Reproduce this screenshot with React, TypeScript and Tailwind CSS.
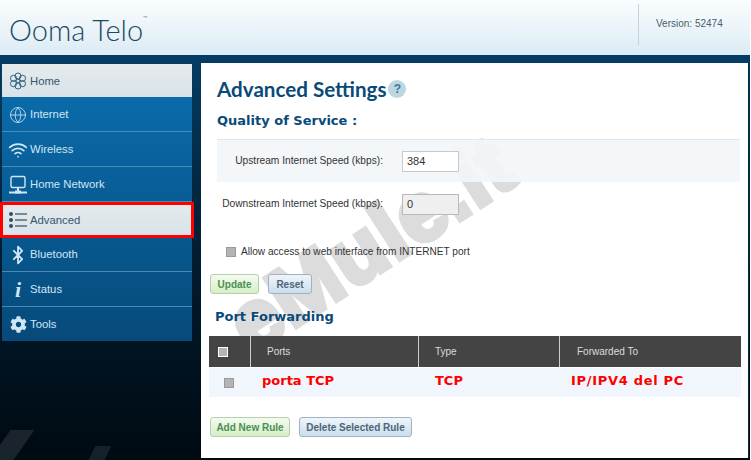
import { Bluetooth, Globe, Wifi } from "lucide-react";
import { FaCog } from "react-icons/fa";
import type { ReactNode } from "react";

const HomeIcon = () => (
  <svg width="18" height="18" viewBox="0 0 20 20" fill="none" stroke="#2f5f80" strokeWidth="1.1">
    <circle cx="10" cy="4.5" r="3.4" />
    <circle cx="10" cy="15.5" r="3.4" />
    <circle cx="5" cy="7" r="3.4" />
    <circle cx="15" cy="7" r="3.4" />
    <circle cx="5" cy="13" r="3.4" />
    <circle cx="15" cy="13" r="3.4" />
    <circle cx="10" cy="10" r="2.2" />
  </svg>
);

const NetworkIcon = () => (
  <svg width="20" height="20" viewBox="0 0 20 20" fill="none" stroke="#cfe6f5" strokeWidth="1.4">
    <rect x="3" y="1.5" width="14" height="11" rx="1.5" />
    <path d="M10 13v3M1 17.5h18" strokeWidth="2" />
    <rect x="7" y="15.5" width="6" height="3" fill="#cfe6f5" stroke="none" />
  </svg>
);

const ListIcon = () => (
  <svg width="18" height="16" viewBox="0 0 18 16" fill="#2f4f68">
    <circle cx="2" cy="2" r="2" />
    <circle cx="2" cy="8" r="2" />
    <circle cx="2" cy="14" r="2" />
    <rect x="6" y="1.4" width="12" height="1.2" />
    <rect x="6" y="7.4" width="12" height="1.2" />
    <rect x="6" y="13.4" width="12" height="1.2" />
  </svg>
);

type Item = { label: string; icon: ReactNode; light?: boolean; outlined?: boolean; h: string; last?: boolean };

const items: Item[] = [
  { label: "Home", icon: <HomeIcon />, light: true, h: "h-[33px]" },
  { label: "Internet", icon: <Globe size={18} strokeWidth={1.1} color="#cfe6f5" />, h: "h-[35px]" },
  { label: "Wireless", icon: <Wifi size={20} strokeWidth={2} color="#cfe6f5" />, h: "h-[35px]" },
  { label: "Home Network", icon: <NetworkIcon />, h: "h-[35px]" },
  { label: "Advanced", icon: <ListIcon />, light: true, outlined: true, h: "h-[35px]" },
  { label: "Bluetooth", icon: <Bluetooth size={20} strokeWidth={2.2} color="#cfe6f5" />, h: "h-[35px]" },
  {
    label: "Status",
    icon: <span className="font-['Liberation_Serif'] text-[22px] font-bold italic leading-none text-[#cfe6f5]">i</span>,
    h: "h-[35px]",
  },
  { label: "Tools", icon: <FaCog size={17} color="#cfe6f5" />, h: "h-[34px]", last: true },
];

function NavRow({ item }: { item: Item }) {
  return (
    <div
      className={
        item.light
          ? `relative flex ${item.h} items-center bg-gradient-to-b from-[#e6eaec] to-[#d8e3ea] pl-[4px] pt-[1px] text-[#35566e]`
          : `flex ${item.h} items-center ${item.last ? "" : "border-b border-[#4a8ab6]"} pl-[4px] pt-[1px] text-[#cfe6f5]`
      }
    >
      <span className="flex w-[24px] items-center justify-center">{item.icon}</span>
      <span className="text-[11.3px]">{item.label}</span>
      {item.outlined && <span className="absolute -inset-x-[2px] top-0 bottom-[-1px] border-[3px] border-[#fe0000]" />}
    </div>
  );
}

function Btn({ green, className, children }: { green?: boolean; className: string; children: ReactNode }) {
  return (
    <div
      className={`flex h-[20px] items-center justify-center rounded-[3px] border pt-[1px] text-[10px] font-bold ${
        green
          ? "border-[#b9cdb0] bg-gradient-to-b from-[#f4fbef] to-[#d4efc6] text-[#4d8f55]"
          : "border-[#9fb2c0] bg-gradient-to-b from-[#f0f5f9] to-[#c9deee] text-[#4f6577]"
      } ${className}`}
    >
      {children}
    </div>
  );
}

const Check = ({ className }: { className: string }) => (
  <span className={`block h-[10px] w-[10px] border border-[#9a9a9a] bg-[#b4b4b4] ${className}`} />
);

export default function App() {
  return (
    <div className="flex h-[460px] w-[751px] flex-col overflow-hidden bg-white font-['Liberation_Sans',sans-serif]">
      <header className="flex h-[55px] w-[750px] justify-between bg-gradient-to-b from-[#fbfdfe] to-[#dcebf5]">
        <div className="pl-[9px] pt-[15px] font-['Lato',sans-serif] text-[29px] font-light leading-none text-[#1d4a63]">
          Ooma Telo<span className="align-top text-[6px]">™</span>
        </div>
        <div className="mt-[4px] flex h-[41px] w-[112px] items-center border-l border-[#c6d2da] pb-[2px] pl-[17px] text-[10px] text-[#4a5f6b]">
          Version: 52474
        </div>
      </header>
      <div className="relative flex h-[405px] w-[750px] border-t-[5px] border-[#053c63] bg-gradient-to-b from-[#053c63] via-[#021c30] to-[#000a12] pb-[2px] pr-[1px] pt-[3px]">
        <aside className="relative ml-[2px] mt-[1px] w-[190px] shrink-0">
          <nav className="relative z-10 bg-gradient-to-b from-[#0b6fb0] to-[#064a7a]">
            {items.map((item) => (
              <NavRow key={item.label} item={item} />
            ))}
          </nav>
          <div className="absolute -bottom-[2px] left-[90px] h-[14px] w-[16px] -skew-x-[25deg] bg-[#14202a]" />
          <div className="absolute -bottom-[2px] left-[-2px] h-[30px] w-[24px] -skew-x-[35deg] bg-[#1a242c]" />
        </aside>
        <main className="relative ml-[9px] flex-1 overflow-hidden border-r border-[#0a2a40] bg-white pl-[8px] pr-[8px]">
          <div className="pointer-events-none absolute left-[9px] top-[139px] origin-center -rotate-[33deg] whitespace-nowrap font-['Liberation_Sans'] text-[84px] font-bold leading-none tracking-[1px] text-[#dcdcdc] [-webkit-text-stroke:5px_#dcdcdc]">
            eMule.it
          </div>
          <div className="relative flex flex-col">
            <div className="flex items-center pl-[8px] pt-[12px]">
              <h1 className="font-['Lato'] text-[20.6px] font-bold leading-[28px] text-[#0a4a78]">Advanced Settings</h1>
              <span className="ml-[2px] flex h-[18px] w-[18px] items-center justify-center rounded-full bg-[#bcd6e2] text-[12px] font-bold text-[#3a7a9a]">?</span>
            </div>
            <h2 className="pl-[8px] pt-[9px] font-['DejaVu_Sans'] text-[13px] font-bold leading-[18px] text-[#0a4a78]">Quality of Service :</h2>
            <div className="ml-[8px] mt-[9px] flex h-[43px] items-center border-t border-[#e3e6e8] bg-[#f3f6f9]/90 text-[10.2px] text-[#333]">
              <span className="w-[166px] text-right">Upstream Internet Speed (kbps):</span>
              <div className="ml-[19px] flex h-[21px] w-[57px] items-center border border-[#c9c9c9] bg-white pl-[4px] text-[11px]">384</div>
            </div>
            <div className="ml-[8px] mt-[1px] flex h-[42px] items-center text-[10.2px] text-[#333]">
              <span className="w-[166px] whitespace-nowrap text-right">Downstream Internet Speed (kbps):</span>
              <div className="ml-[19px] flex h-[21px] w-[57px] items-center border border-[#b9b9b9] bg-[#efefef] pl-[4px] text-[11px]">0</div>
            </div>
            <div className="ml-[17px] mt-[17px] flex h-[20px] items-center text-[10.1px] text-[#333]">
              <Check className="" />
              <span className="ml-[5px]">Allow access to web interface from INTERNET port</span>
            </div>
            <div className="mt-[12px] flex pl-[1px]">
              <Btn green className="w-[49px]">Update</Btn>
              <Btn className="ml-[9px] w-[44px]">Reset</Btn>
            </div>
            <h2 className="pl-[6px] pt-[14px] font-['DejaVu_Sans'] text-[13px] font-bold leading-[18px] text-[#0a4a78]">Port Forwarding</h2>
            <div className="mt-[10px] grid w-[532px] grid-cols-[42px_168px_141px_181px] text-[10px] text-[#dcdcdc]">
              <div className="flex h-[31px] items-center border-r border-[#ccc] bg-[#444] pl-[9px]"><Check className="border-white" /></div>
              <div className="flex h-[31px] items-center border-r border-[#ccc] bg-[#444] pl-[16px]">Ports</div>
              <div className="flex h-[31px] items-center border-r border-[#ccc] bg-[#444] pl-[16px]">Type</div>
              <div className="flex h-[31px] items-center bg-[#444] pl-[17px]">Forwarded To</div>
              <div className="mt-[1px] flex h-[29px] items-center justify-center bg-[#f0f6fb]"><Check className="mr-[3px]" /></div>
              <div className="mt-[1px] flex h-[29px] items-center bg-[#f0f6fb] pb-[4px] pl-[11px] font-['DejaVu_Sans'] text-[13px] font-bold text-[#fe0000]">porta TCP</div>
              <div className="mt-[1px] flex h-[29px] items-center bg-[#f0f6fb] pb-[4px] pl-[16px] font-['DejaVu_Sans'] text-[13px] font-bold text-[#fe0000]">TCP</div>
              <div className="mt-[1px] flex h-[29px] items-center bg-[#f0f6fb] pb-[4px] pl-[11px] font-['DejaVu_Sans'] text-[13px] font-bold tracking-[0.7px] text-[#fe0000]">IP/IPV4 del PC</div>
            </div>
            <div className="mt-[20px] flex pl-[1px]">
              <Btn green className="w-[80px]">Add New Rule</Btn>
              <Btn className="ml-[9px] w-[113px]">Delete Selected Rule</Btn>
            </div>
          </div>
        </main>
      </div>
    </div>
  );
}
